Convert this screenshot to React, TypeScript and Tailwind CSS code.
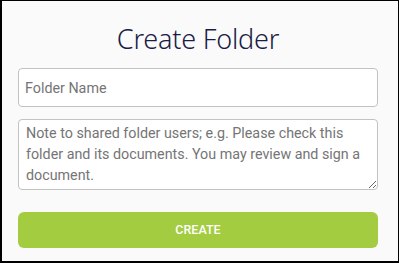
import React from "react";

export default function App() {
  return (
    <div className="w-[399px] h-[264px] bg-white">
      <div className="w-[399px] h-[263px] bg-[#fafafa] border-t border-r border-l-2 border-b-2 border-black box-border pl-[16px] pr-[20px] pt-[20px] flex flex-col">
        <h1
          className="text-center text-[27px] font-light leading-[36px] text-[#1c1c45] h-[47px] tracking-[-0.2px]"
          style={{ fontFamily: '"Noto Sans", sans-serif' }}
        >
          Create Folder
        </h1>
        <div className="flex flex-col" style={{ fontFamily: 'Roboto, sans-serif' }}>
          <input
            className="w-[360px] h-[39px] border border-[#c2c2c2] rounded-[4px] bg-white px-[6px] text-[14.3px] text-[#333] placeholder:text-[#757575] outline-none"
            placeholder="Folder Name"
          />
          <textarea
            className="mt-[12px] w-[360px] h-[71px] border border-[#c2c2c2] rounded-[4px] bg-white pl-[7px] pr-[6px] pt-[3px] text-[14.3px] leading-[21px] text-[#333] placeholder:text-[#757575] outline-none resize-y"
            placeholder="Note to shared folder users; e.g. Please check this folder and its documents. You may review and sign a document."
          />
          <button className="mt-[22px] w-[360px] h-[36px] rounded-[6px] bg-[#a3cc41] text-white text-[12.5px] font-medium">
            CREATE
          </button>
        </div>
      </div>
    </div>
  );
}
